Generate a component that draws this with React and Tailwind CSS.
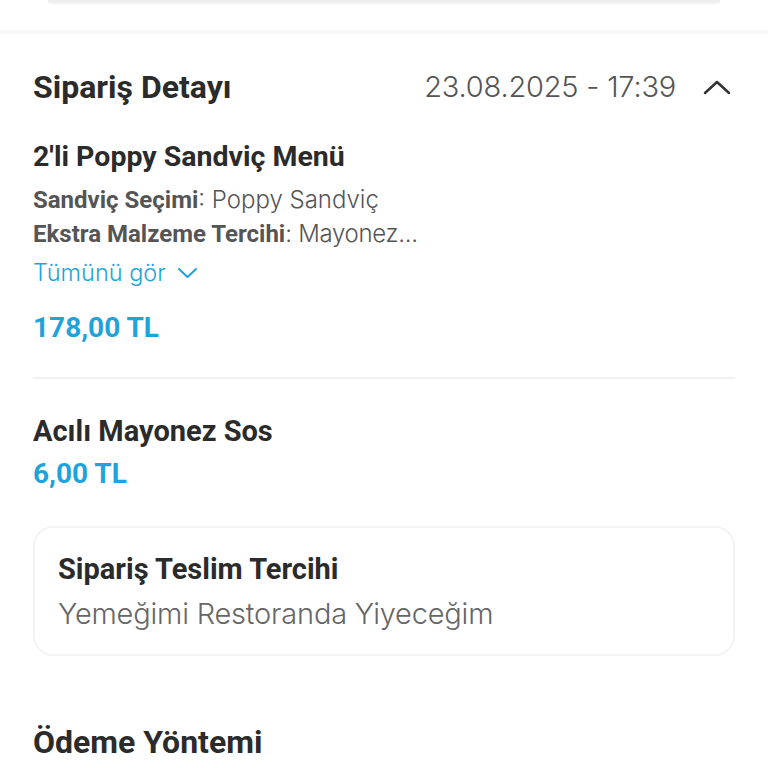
import React from "react";

const head = { fontFamily: "Roboto, 'Noto Sans', sans-serif" };
const light = { fontFamily: "Inter, 'Noto Sans', sans-serif" };

export default function App() {
  return (
    <div className="w-[768px] h-[768px] bg-white overflow-hidden text-[#2b2b2b]">
      <div className="h-[30px] px-[48px]">
        <div className="h-[3px] bg-[#efefef] rounded-b-md shadow-[0_1px_2px_rgba(0,0,0,0.06)] w-[672px]" />
      </div>
      <div className="h-[4px] bg-[#f8f8f8]" />
      <div className="px-[33px]">
        <div className="flex items-center justify-between h-[106px]">
          <div className="text-[32px] font-bold leading-[36px]" style={head}>Sipariş Detayı</div>
          <div className="flex items-center">
            <span className="text-[29px] font-light leading-[36px] text-[#555] tracking-[-0.2px]" style={light}>23.08.2025 - 17:39</span>
            <svg className="ml-[27px] mr-[4px]" width="28" height="16" viewBox="0 0 28 16" fill="none" stroke="#333" strokeWidth="2.5" strokeLinecap="round" strokeLinejoin="round">
              <path d="M2 14 L14 3 L26 14" />
            </svg>
          </div>
        </div>
        <div className="text-[28.5px] font-bold leading-[34px]" style={head}>2'li Poppy Sandviç Menü</div>
        <div className="mt-[9px] text-[24px] leading-[33px] text-[#555]" style={light}>
          <div><span className="font-bold" style={head}>Sandviç Seçimi</span><span className="font-light">: Poppy Sandviç</span></div>
          <div><span className="font-bold" style={head}>Ekstra Malzeme Tercihi</span><span className="font-light tracking-[-0.3px]">: Mayonez...</span></div>
        </div>
        <div className="flex items-center mt-[6px] text-[23.5px] leading-[32px] text-[#1fa3dc] font-light" style={light}>
          Tümünü gör
          <svg className="ml-[11px]" width="21" height="12" viewBox="0 0 21 12" fill="none" stroke="#1fa3dc" strokeWidth="2" strokeLinecap="round" strokeLinejoin="round">
            <path d="M2 2 L10.5 10 L19 2" />
          </svg>
        </div>
        <div className="mt-[22px] text-[28px] font-bold leading-[34px] text-[#1fa3dc]" style={head}>178,00 TL</div>
        <div className="mt-[32px] h-[2px] bg-[#f1f1f1]" />
        <div className="mt-[35px] text-[29px] font-bold leading-[34px]" style={head}>Acılı Mayonez Sos</div>
        <div className="mt-[9px] text-[28px] font-bold leading-[34px] text-[#1fa3dc]" style={head}>6,00 TL</div>
        <div className="mt-[35px] h-[130px] rounded-[20px] border-2 border-[#f3f3f3] px-[23px] pt-[24px]">
          <div className="text-[29px] font-bold leading-[34px]" style={head}>Sipariş Teslim Tercihi</div>
          <div className="mt-[11px] text-[29px] font-light leading-[34px] text-[#666] tracking-[-0.2px]" style={light}>Yemeğimi Restoranda Yiyeceğim</div>
        </div>
        <div className="mt-[68px] text-[32px] font-bold leading-[36px]" style={head}>Ödeme Yöntemi</div>
      </div>
    </div>
  );
}
